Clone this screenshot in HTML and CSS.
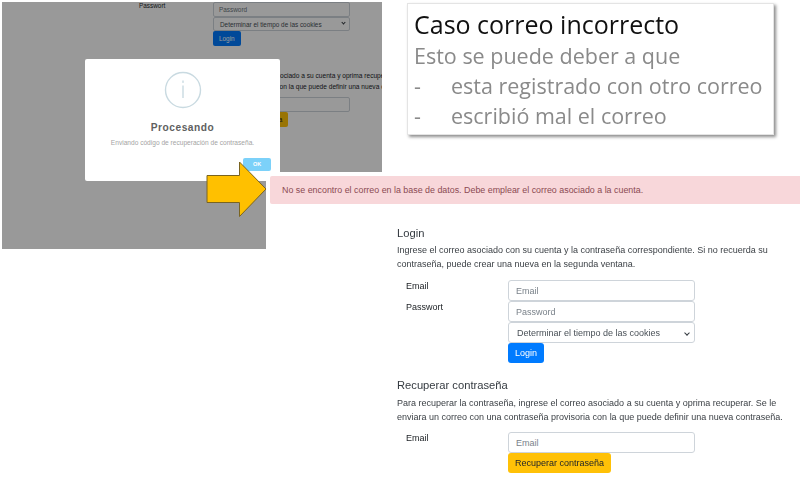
FILE: index.html
```html
<!DOCTYPE html>
<html>

<head>
    <title>Caso correo incorrecto</title>
    <link rel="stylesheet" href="styles.css">
</head>

<body>
    <div class="canvas">
        <!-- captura de fondo con el dialogo -->
        <div class="shot">
            <div class="small-form">
                <div class="small-row">
                    <label>Passwort</label>
                    <div class="small-fields">
                        <div class="small-input">Password</div>
                        <div class="small-input small-select">Determinar el tiempo de las cookies<span class="chevron"></span></div>
                        <div class="small-btn small-blue">Login</div>
                    </div>
                </div>
                <h2>Recuperar contraseña</h2>
                <p>Para recuperar la contraseña, ingrese el correo asociado a su cuenta y oprima recuperar. Se le<br>enviara un correo con una contraseña provisoria con la que puede definir una nueva contraseña.</p>
                <div class="small-row">
                    <label>Email</label>
                    <div class="small-fields">
                        <div class="small-input">Email</div>
                        <div class="small-btn small-yellow">Recuperar contraseña</div>
                    </div>
                </div>
            </div>
            <div class="shade"></div>
        </div>

        <div class="modal">
            <svg class="info-icon" width="38" height="38" viewBox="0 0 38 38">
                <circle cx="19" cy="19" r="17.5" fill="none" stroke="#c9dae1" stroke-width="1.4" />
                <rect x="18.3" y="9.5" width="1.4" height="2.4" fill="#c9dae1" />
                <rect x="18.3" y="14.5" width="1.4" height="12.5" fill="#c9dae1" />
            </svg>
            <div class="modal-title">Procesando</div>
            <div class="modal-text">Enviando código de recuperación de contraseña.</div>
            <div class="modal-footer">
                <div class="ok-btn">OK</div>
            </div>
        </div>

        <div class="white-patch"></div>

        <div class="alert">No se encontro el correo en la base de datos. Debe emplear el correo asociado a la cuenta.</div>

        <svg class="arrow" width="62" height="58" viewBox="0 0 62 58">
            <polygon points="1,14.5 33.5,14.5 33.5,1 60,28 33.5,55.500 33.5,41.500 1,41.500" fill="#ffc000" stroke="#7a6420" stroke-width="1" />
        </svg>

        <div class="note">
            <div class="note-title">Caso correo incorrecto</div>
            <div class="note-line">Esto se puede deber a que</div>
            <div class="note-line note-item"><span>-</span>esta registrado con otro correo</div>
            <div class="note-line note-item"><span>-</span>escribió mal el correo</div>
        </div>

        <div class="page-form">
            <h2>Login</h2>
            <p>Ingrese el correo asociado con su cuenta y la contraseña correspondiente. Si no recuerda su contraseña, puede crear una nueva en la segunda ventana.</p>
            <div class="form-row">
                <label>Email</label>
                <div class="input">Email</div>
            </div>
            <div class="form-row">
                <label>Passwort</label>
                <div class="input">Password</div>
            </div>
            <div class="form-row">
                <label></label>
                <div class="input select">Determinar el tiempo de las cookies<span class="chevron"></span></div>
            </div>
            <div class="form-row">
                <label></label>
                <div><div class="btn btn-blue">Login</div></div>
            </div>

            <h2 class="second">Recuperar contraseña</h2>
            <p class="second-text">Para recuperar la contraseña, ingrese el correo asociado a su cuenta y oprima recuperar. Se le enviara un correo con una contraseña provisoria con la que puede definir una nueva contraseña.</p>
            <div class="form-row">
                <label>Email</label>
                <div class="input">Email</div>
            </div>
            <div class="form-row">
                <label></label>
                <div><div class="btn btn-yellow">Recuperar contraseña</div></div>
            </div>
        </div>
    </div>
</body>

</html>
```

FILE: styles.css
```css
body {
    margin: 0;
    background-color: #ffffff;
    font-family: "Liberation Sans", Arial, sans-serif;
    color: #212529;
}

.canvas {
    position: relative;
    width: 800px;
    height: 489px;
    overflow: hidden;
    filter: blur(0.45px);
}

/* screenshot on the left */
.shot {
    position: absolute;
    left: 2px;
    top: 2px;
    width: 380px;
    height: 247px;
    overflow: hidden;
    background-color: #ffffff;
}

.shade {
    position: absolute;
    left: 0;
    top: 0;
    width: 100%;
    height: 100%;
    background: rgba(0, 0, 0, 0.4);
}

.small-form {
    padding-left: 131px;
    white-space: nowrap;
    font-size: 6.400px;
}

.small-form h2 {
    margin: 13px 0 0 0;
    font-size: 8.100px;
    font-weight: 400;
    line-height: 12px;
}

.small-form p {
    margin: 0;
    font-size: 6.600px;
    line-height: 10.300px;
}

.small-row {
    display: grid;
    grid-template-columns: 80px 137px;
}

.small-row label {
    padding: 0 0 0 6px;
    line-height: 7px;
}

.small-form p + .small-row {
    margin-top: 5px;
}

.small-form p + .small-row label {
    line-height: 14px;
}

.small-input {
    position: relative;
    height: 14.700px;
    box-sizing: border-box;
    padding: 0 5px;
    line-height: 13px;
    color: #6c757d;
    background: #ffffff;
    border: 1px solid #ced4da;
    border-radius: 2px;
}

.small-select {
    padding-left: 6px;
    color: #495057;
}

.small-btn {
    display: inline-block;
    vertical-align: top;
    padding: 0 6px;
    height: 15px;
    line-height: 15px;
    border-radius: 2px;
}

.small-blue {
    color: #ffffff;
    background-color: #007bff;
}

.small-yellow {
    color: #212529;
    background-color: #ffc107;
}

/* dialog */
.modal {
    position: absolute;
    left: 85px;
    top: 59px;
    width: 195px;
    height: 122px;
    box-sizing: border-box;
    padding-top: 12px;
    text-align: center;
    background-color: #ffffff;
    border-radius: 2px;
}

.info-icon {
    display: block;
    margin: 0 auto;
}

.modal-title {
    margin-top: 12px;
    font-size: 10.200px;
    line-height: 14px;
    font-weight: 700;
    letter-spacing: 0.5px;
    color: #5f5f5f;
}

.modal-text {
    margin-top: 3px;
    font-size: 6.600px;
    line-height: 9px;
    color: #a4a4a4;
}

.modal-footer {
    display: flex;
    justify-content: flex-end;
    padding: 11px 9px 0 0;
}

.ok-btn {
    width: 28px;
    height: 13px;
    font-size: 5.500px;
    font-weight: 700;
    line-height: 13px;
    color: #ffffff;
    background-color: #7cd1f9;
    border-radius: 2px;
}

.white-patch {
    position: absolute;
    left: 266px;
    top: 172px;
    width: 120px;
    height: 80px;
    background-color: #ffffff;
}

.alert {
    position: absolute;
    left: 270px;
    top: 176px;
    width: 530px;
    height: 28px;
    box-sizing: border-box;
    padding-left: 12px;
    font-size: 8.900px;
    line-height: 28px;
    color: #8b4a52;
    background-color: #f8d7da;
    border-radius: 2px 0 0 2px;
}

.arrow {
    position: absolute;
    left: 206px;
    top: 161px;
}

/* slide note */
.note {
    position: absolute;
    left: 407px;
    top: 3px;
    width: 367px;
    height: 132px;
    box-sizing: border-box;
    padding: 4px 0 0 6px;
    font-family: "Open Sans", sans-serif;
    background-color: #ffffff;
    border: 1px solid #e4e4e4;
    box-shadow: 2px 2px 3px rgba(0, 0, 0, 0.45);
}

.note-title {
    font-size: 25px;
    line-height: 33px;
    color: #111111;
}

.note-line {
    font-size: 21.500px;
    line-height: 30px;
    color: #8a8a8a;
}

.note-item span {
    display: inline-block;
    width: 37px;
}

/* login page */
.page-form {
    position: absolute;
    left: 397px;
    top: 225px;
    width: 390px;
}

.page-form h2 {
    margin: 0;
    font-size: 11.200px;
    font-weight: 400;
    line-height: 16px;
    color: #343a40;
}

.page-form h2.second {
    margin-top: 14px;
}

.page-form p {
    margin: 2px 0 9px 0;
    font-size: 9px;
    line-height: 14px;
    color: #3a3f44;
}

.page-form p.second-text {
    margin-top: 3px;
    margin-bottom: 8px;
}

.form-row {
    display: grid;
    grid-template-columns: 111px 187px;
}

.form-row label {
    padding: 0 0 0 9px;
    font-size: 9px;
    line-height: 12px;
}

.input {
    position: relative;
    height: 21px;
    box-sizing: border-box;
    padding: 0 7px;
    font-size: 9px;
    line-height: 20px;
    color: #7a828a;
    background-color: #ffffff;
    border: 1px solid #ced4da;
    border-radius: 3px;
}

.select {
    padding-left: 8px;
    color: #495057;
}

.chevron {
    position: absolute;
    right: 5px;
    top: 40%;
    width: 3px;
    height: 3px;
    border-right: 1px solid #343a40;
    border-bottom: 1px solid #343a40;
    transform: rotate(45deg);
}

.small-input .chevron {
    right: 4px;
    top: 30%;
    width: 2px;
    height: 2px;
}

.btn {
    display: inline-block;
    vertical-align: top;
    height: 20px;
    padding: 0 7px;
    font-size: 9px;
    line-height: 20px;
    border-radius: 3px;
}

.btn-blue {
    color: #ffffff;
    background-color: #007bff;
}

.btn-yellow {
    color: #212529;
    background-color: #ffc107;
}
```
